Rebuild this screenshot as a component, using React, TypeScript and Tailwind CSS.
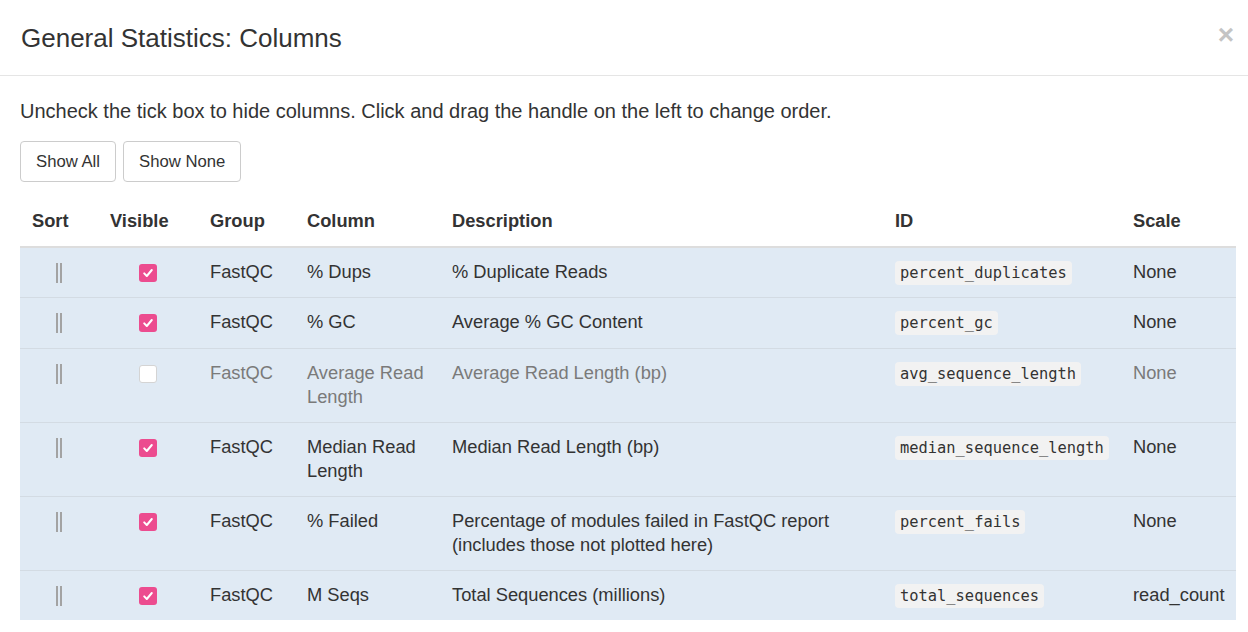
type Row = {
  group: string;
  column: string[];
  description: string[];
  id: string;
  scale: string;
  visible: boolean;
};

const rows: Row[] = [
  { group: "FastQC", column: ["% Dups"], description: ["% Duplicate Reads"], id: "percent_duplicates", scale: "None", visible: true },
  { group: "FastQC", column: ["% GC"], description: ["Average % GC Content"], id: "percent_gc", scale: "None", visible: true },
  { group: "FastQC", column: ["Average Read", "Length"], description: ["Average Read Length (bp)"], id: "avg_sequence_length", scale: "None", visible: false },
  { group: "FastQC", column: ["Median Read", "Length"], description: ["Median Read Length (bp)"], id: "median_sequence_length", scale: "None", visible: true },
  {
    group: "FastQC",
    column: ["% Failed"],
    description: ["Percentage of modules failed in FastQC report", "(includes those not plotted here)"],
    id: "percent_fails",
    scale: "None",
    visible: true,
  },
  { group: "FastQC", column: ["M Seqs"], description: ["Total Sequences (millions)"], id: "total_sequences", scale: "read_count", visible: true },
];

function Handle() {
  return (
    <span className="inline-flex gap-[2px] align-middle">
      <span className="h-[20px] w-[2px] bg-[#a3a3a3]" />
      <span className="h-[20px] w-[2px] bg-[#a3a3a3]" />
    </span>
  );
}

function Tick({ checked }: { checked: boolean }) {
  if (!checked) {
    return <span className="inline-block h-[18px] w-[18px] rounded-[3px] border border-[#d4d4d4] bg-white align-middle" />;
  }
  return (
    <span className="inline-flex h-[18px] w-[18px] items-center justify-center rounded-[3px] bg-[#ec4c8f] align-middle">
      <svg width="12" height="12" viewBox="0 0 12 12" fill="none">
        <path d="M2.2 6.4 L4.8 9 L9.8 3" stroke="white" strokeWidth="2" strokeLinecap="round" strokeLinejoin="round" />
      </svg>
    </span>
  );
}

export default function App() {
  return (
    <div className="h-[632px] w-[1248px] overflow-hidden bg-white font-['Liberation_Sans',Arial,sans-serif] text-[#333]">
      <div className="flex h-[76px] items-center justify-between border-b border-[#e5e5e5] pl-[21px] pr-[14px]">
        <h2 className="text-[26px] font-medium leading-none text-[#333]">General Statistics: Columns</h2>
        <span className="-mt-[6px] text-[28px] font-bold leading-none text-[#c4c4c4]">×</span>
      </div>

      <div className="px-5 pt-[23px]">
        <p className="mb-[17px] text-[20px] leading-[25px]">
          Uncheck the tick box to hide columns. Click and drag the handle on the left to change order.
        </p>
        <div className="flex gap-[7px]">
          <button className="h-[41px] rounded-[4px] border border-[#cccccc] bg-white px-[15px] text-[16.7px] text-[#333]">Show All</button>
          <button className="h-[41px] rounded-[4px] border border-[#cccccc] bg-white px-[15px] text-[16.7px] text-[#333]">Show None</button>
        </div>

        <table className="mt-[15px] w-[1216px] table-fixed border-collapse text-[18.3px] leading-[24.5px]">
          <colgroup>
            <col className="w-[78px]" />
            <col className="w-[100px]" />
            <col className="w-[97px]" />
            <col className="w-[145px]" />
            <col className="w-[443px]" />
            <col className="w-[238px]" />
            <col className="w-[115px]" />
          </colgroup>
          <thead>
            <tr className="border-b-2 border-[#dddddd] text-left">
              <th className="px-3 py-3 font-bold">Sort</th>
              <th className="px-3 py-3 font-bold">Visible</th>
              <th className="px-3 py-3 font-bold">Group</th>
              <th className="px-3 py-3 font-bold">Column</th>
              <th className="px-3 py-3 font-bold">Description</th>
              <th className="px-3 py-3 font-bold">ID</th>
              <th className="px-3 py-3 font-bold">Scale</th>
            </tr>
          </thead>
          <tbody>
            {rows.map((r) => (
              <tr key={r.id} className="border-t border-[#d3dbe3] bg-[#e0eaf4] align-top first:border-t-0">
                <td className="py-3 text-center">
                  <Handle />
                </td>
                <td className="py-3 text-center">
                  <Tick checked={r.visible} />
                </td>
                <td className={`px-3 py-3 ${r.visible ? "" : "text-[#7a7a7a]"}`}>{r.group}</td>
                <td className={`px-3 py-3 ${r.visible ? "" : "text-[#7a7a7a]"}`}>
                  {r.column.map((c) => (
                    <div key={c}>{c}</div>
                  ))}
                </td>
                <td className={`px-3 py-3 ${r.visible ? "" : "text-[#7a7a7a]"}`}>
                  {r.description.map((d) => (
                    <div key={d}>{d}</div>
                  ))}
                </td>
                <td className="px-3 py-3">
                  <code className="rounded-[4px] bg-[#f2f2f2] px-[5px] py-[3px] font-['DejaVu_Sans_Mono',monospace] text-[15.4px] text-[#333]">
                    {r.id}
                  </code>
                </td>
                <td className={`px-3 py-3 ${r.visible ? "" : "text-[#7a7a7a]"}`}>{r.scale}</td>
              </tr>
            ))}
          </tbody>
        </table>
      </div>
    </div>
  );
}
